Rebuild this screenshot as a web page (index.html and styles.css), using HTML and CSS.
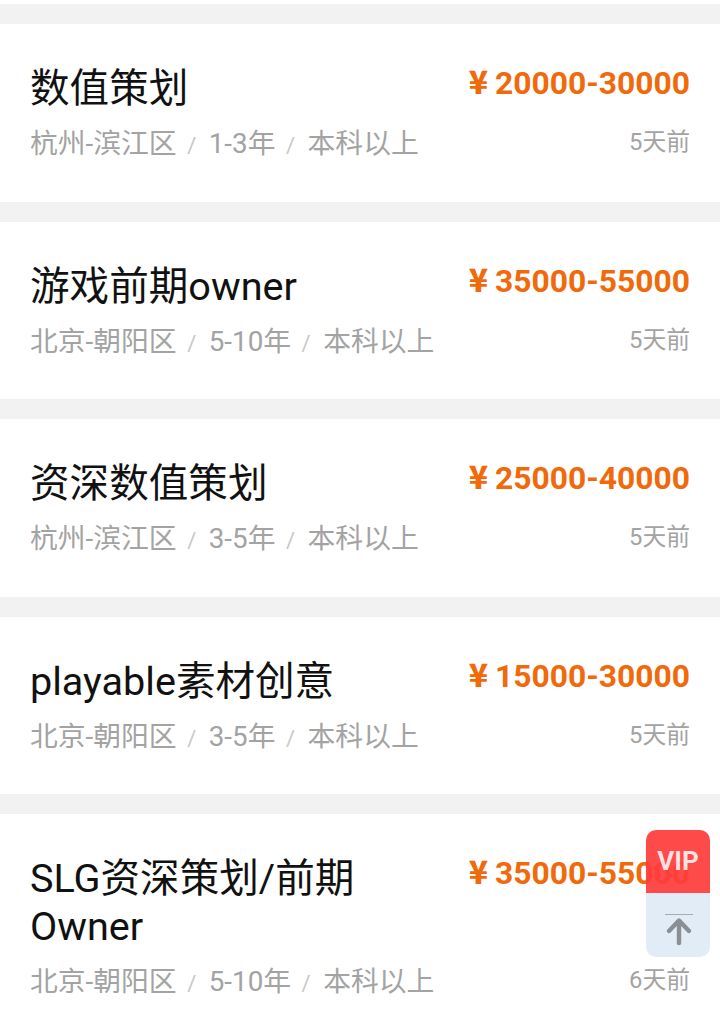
FILE: index.html
```html
<!DOCTYPE html>
<html lang="zh-CN">
  <head>
    <meta charset="UTF-8" />
    <meta name="viewport" content="width=device-width, initial-scale=1.0" />
    <title>职位列表</title>
    <link rel="stylesheet" href="styles.css">
  </head>
  <body>
    <div class="job-list">
      <div class="job-card">
        <div class="job-main">
          <div class="job-title">数值策划</div>
          <div class="job-meta">杭州-滨江区<span class="sep">/</span>1-3年<span class="sep">/</span>本科以上</div>
        </div>
        <div class="job-side">
          <div class="salary"><span class="yen">¥</span>20000-30000</div>
          <div class="job-date">5天前</div>
        </div>
      </div>

      <div class="job-card">
        <div class="job-main">
          <div class="job-title">游戏前期owner</div>
          <div class="job-meta">北京-朝阳区<span class="sep">/</span>5-10年<span class="sep">/</span>本科以上</div>
        </div>
        <div class="job-side">
          <div class="salary"><span class="yen">¥</span>35000-55000</div>
          <div class="job-date">5天前</div>
        </div>
      </div>

      <div class="job-card">
        <div class="job-main">
          <div class="job-title">资深数值策划</div>
          <div class="job-meta">杭州-滨江区<span class="sep">/</span>3-5年<span class="sep">/</span>本科以上</div>
        </div>
        <div class="job-side">
          <div class="salary"><span class="yen">¥</span>25000-40000</div>
          <div class="job-date">5天前</div>
        </div>
      </div>

      <div class="job-card">
        <div class="job-main">
          <div class="job-title">playable素材创意</div>
          <div class="job-meta">北京-朝阳区<span class="sep">/</span>3-5年<span class="sep">/</span>本科以上</div>
        </div>
        <div class="job-side">
          <div class="salary"><span class="yen">¥</span>15000-30000</div>
          <div class="job-date">5天前</div>
        </div>
      </div>

      <div class="job-card">
        <div class="job-main">
          <div class="job-title">SLG资深策划/前期Owner</div>
          <div class="job-meta">北京-朝阳区<span class="sep">/</span>5-10年<span class="sep">/</span>本科以上</div>
        </div>
        <div class="job-side">
          <div class="salary"><span class="yen">¥</span>35000-55000</div>
          <div class="job-date">6天前</div>
        </div>
      </div>
    </div>

    <!-- Floating buttons sit over the last card -->
    <div class="float-tools">
      <div class="vip-btn">VIP</div>
      <div class="top-btn">
        <svg width="30" height="34" viewBox="0 0 30 34" fill="none">
          <path d="M1 1.5H29" stroke="#a9adb2" stroke-width="1" />
          <path d="M15 30V8M5 18L15 7.5L25 18" stroke="#8b8f94" stroke-width="4.4" stroke-linecap="round" stroke-linejoin="round" />
        </svg>
      </div>
    </div>
  </body>
</html>
```

FILE: styles.css
```css
* {
  margin: 0;
  padding: 0;
  box-sizing: border-box;
}

body {
  position: relative;
  height: 1029px;
  overflow: hidden;
  background: #fff;
  font-family: Roboto, "Noto Sans CJK SC", sans-serif;
}

.job-list {
  padding-top: 20px;
  border-top: 4px solid #fff;
  background: #f2f2f2;
}

.job-card {
  display: flex;
  justify-content: space-between;
  margin-bottom: 20px;
  padding: 41px 30px 39.5px;
  background: #fff;
}

.job-main {
  flex: 1;
  min-width: 0;
}

.job-title {
  max-width: 420px;
  font-size: 39.6px;
  line-height: 48px;
  color: #111;
}

.job-meta {
  height: 36px;
  margin-top: 13px;
  font-size: 27.8px;
  line-height: 36px;
  color: #a3a3a3;
}

.sep {
  margin: 0 12.5px 0 10.5px;
  font-size: 22px;
  line-height: 1;
  color: #c8c8c8;
}

/* salary on top, date pinned level with the meta line */
.job-side {
  display: flex;
  flex-direction: column;
  justify-content: space-between;
  flex-shrink: 0;
  margin-top: -2px;
  text-align: right;
}

.salary {
  height: 40px;
  font-size: 31.8px;
  line-height: 40px;
  font-weight: 700;
  color: #f06a0c;
}

.yen {
  margin-right: 7px;
  font-family: "Noto Sans CJK SC", sans-serif;
  font-weight: 900;
  line-height: 1;
}

.job-date {
  font-size: 23.8px;
  line-height: 40px;
  color: #a3a3a3;
}

.float-tools {
  position: absolute;
  left: 646px;
  top: 830px;
  width: 64px;
  height: 127px;
  border-radius: 10px;
  overflow: hidden;
}

.vip-btn {
  height: 63px;
  background: rgba(255, 60, 60, 0.93);
  color: rgba(255, 255, 255, 0.85);
  font-size: 26px;
  font-weight: 700;
  line-height: 63px;
  text-align: center;
}

.top-btn {
  display: flex;
  justify-content: center;
  height: 64px;
  padding: 20px 0 0 2px;
  background: #e1ecf6;
}
```
